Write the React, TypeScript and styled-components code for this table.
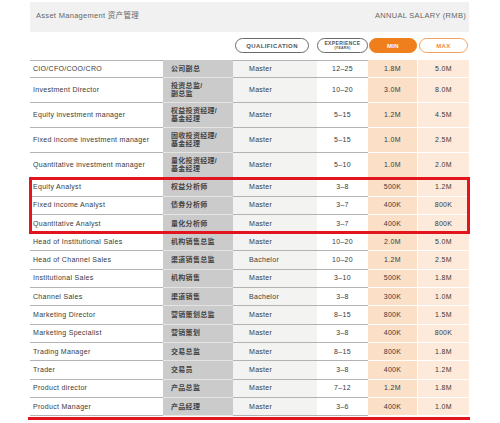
import React from "react";
import styled, { createGlobalStyle, css } from "styled-components";

const Global = createGlobalStyle`
  html, body { margin: 0; padding: 0; background: #ffffff; }
  body { font-family: "Liberation Sans", Arial, sans-serif; }
`;

const COLS = "133px 70px 84px 51px 50px 51px";
const RED = "#e2141d";
const ORANGE = "#ef7f1c";

const Page = styled.div`
  width: 439px;
  padding: 2px 0 0 30px;
`;

const Header = styled.div`
  height: 30px;
  box-sizing: border-box;
  background: #f1f1f1;
  display: flex;
  justify-content: space-between;
  align-items: flex-start;
  padding: 9px 3px 0 6px;
  font-size: 7.5px;
  line-height: 9px;
  letter-spacing: 0.3px;
  color: #666;
`;

const HeaderTitle = styled.span`
  font-family: "Liberation Sans", "Noto Sans CJK SC", sans-serif;
`;

const PillRow = styled.div`
  display: grid;
  grid-template-columns: ${COLS};
  margin-top: 6px;
  height: 15px;
`;

type PillKind = "outline" | "filled" | "orange";

const Pill = styled.div<{ $kind: PillKind; $col: number }>`
  grid-column: ${(p) => p.$col};
  box-sizing: border-box;
  height: 15px;
  border-radius: 8px;
  display: flex;
  flex-direction: column;
  align-items: center;
  justify-content: center;
  font-weight: 700;
  font-size: 6px;
  letter-spacing: 0.4px;
  line-height: 6px;
  ${(p) =>
    p.$kind === "outline"
      ? css`
          border: 1px solid #6a6a6a;
          color: #555;
          background: #fff;
        `
      : p.$kind === "filled"
      ? css`
          border: 1px solid ${ORANGE};
          background: ${ORANGE};
          color: #fff;
        `
      : css`
          border: 1px solid #f3a160;
          background: #fff;
          color: #f08a34;
        `}
`;

const QualPill = styled(Pill)`
  margin: 0 8px 0 2px;
`;

const SidePill = styled(Pill)`
  margin: 0 1px;
`;

const PillSub = styled.span`
  font-size: 3.6px;
  line-height: 4px;
  letter-spacing: 0.2px;
`;

const Table = styled.div`
  margin-top: 7px;
`;

const Row = styled.div<{ $tall?: boolean; $first?: boolean }>`
  display: grid;
  grid-template-columns: ${COLS};
  min-height: ${(p) => (p.$tall ? "25px" : "18.3px")};
  ${(p) =>
    p.$first &&
    css`
      & > div:nth-child(1),
      & > div:nth-child(3),
      & > div:nth-child(4) {
        border-top: 1px solid #b3b3b3;
      }
    `}
`;

const Highlight = styled.div`
  outline: 3px solid ${RED};
  outline-offset: -2px;
  position: relative;
  z-index: 1;
`;

const Cell = styled.div<{ $col: number }>`
  box-sizing: border-box;
  display: flex;
  align-items: center;
  padding: 4px 3px;
  font-size: 7px;
  line-height: 8px;
  letter-spacing: 0.3px;
  color: #3a3a3a;
  border-bottom: 1px solid #b3b3b3;
  ${(p) =>
    p.$col === 2 &&
    css`
      background: #cbcbcb;
      border-bottom-color: #e4e4e4;
      padding-left: 8px;
      font-family: "Liberation Sans", "Noto Sans CJK SC", sans-serif;
      font-weight: 700;
      color: #444;
      white-space: pre-line;
    `}
  ${(p) =>
    p.$col === 3 &&
    css`
      background: #f3f3f1;
      padding-left: 16px;
    `}
  ${(p) =>
    p.$col === 4 &&
    css`
      justify-content: center;
    `}
  ${(p) =>
    p.$col === 5 &&
    css`
      background: #fbdfc6;
      border-bottom-color: #fff;
      border-right: 1px solid #fff;
      justify-content: center;
    `}
  ${(p) =>
    p.$col === 6 &&
    css`
      background: #fdeadb;
      border-bottom-color: #fff;
      justify-content: center;
    `}
`;

const BottomRule = styled.div`
  height: 3px;
  background: ${RED};
  margin: 1px -1px 0 -2px;
`;

type Entry = [string, string, string, string, string, string];

const rows: Entry[] = [
  ["CIO/CFO/COO/CRO", "公司副总", "Master", "12–25", "1.8M", "5.0M"],
  ["Investment Director", "投资总监/\n副总监", "Master", "10–20", "3.0M", "8.0M"],
  ["Equity investment manager", "权益投资经理/\n基金经理", "Master", "5–15", "1.2M", "4.5M"],
  ["Fixed income investment manager", "固收投资经理/\n基金经理", "Master", "5–15", "1.0M", "2.5M"],
  ["Quantitative investment manager", "量化投资经理/\n基金经理", "Master", "5–10", "1.0M", "2.0M"],
  ["Equity Analyst", "权益分析师", "Master", "3–8", "500K", "1.2M"],
  ["Fixed income Analyst", "债券分析师", "Master", "3–7", "400K", "800K"],
  ["Quantitative Analyst", "量化分析师", "Master", "3–7", "400K", "800K"],
  ["Head of Institutional Sales", "机构销售总监", "Master", "10–20", "2.0M", "5.0M"],
  ["Head of Channel Sales", "渠道销售总监", "Bachelor", "10–20", "1.2M", "2.5M"],
  ["Institutional Sales", "机构销售", "Master", "3–10", "500K", "1.8M"],
  ["Channel Sales", "渠道销售", "Bachelor", "3–8", "300K", "1.0M"],
  ["Marketing Director", "营销策划总监", "Master", "8–15", "800K", "1.5M"],
  ["Marketing Specialist", "营销策划", "Master", "3–8", "400K", "800K"],
  ["Trading Manager", "交易总监", "Master", "8–15", "800K", "1.8M"],
  ["Trader", "交易员", "Master", "3–8", "400K", "1.2M"],
  ["Product director", "产品总监", "Master", "7–12", "1.2M", "1.8M"],
  ["Product Manager", "产品经理", "Master", "3–6", "400K", "1.0M"],
];

const renderRow = (r: Entry, i: number) => (
  <Row key={i} $tall={r[1].includes("\n")} $first={i === 0}>
    {r.map((v, c) => (
      <Cell key={c} $col={c + 1}>
        {v}
      </Cell>
    ))}
  </Row>
);

export default function App() {
  return (
    <>
      <Global />
      <Page>
        <Header>
          <HeaderTitle>Asset Management 资产管理</HeaderTitle>
          <span>ANNUAL SALARY (RMB)</span>
        </Header>
        <PillRow>
          <QualPill $kind="outline" $col={3}>
            QUALIFICATION
          </QualPill>
          <Pill $kind="outline" $col={4}>
            <span style={{ fontSize: "5px", lineHeight: "5px" }}>EXPERIENCE</span>
            <PillSub>(YEARS)</PillSub>
          </Pill>
          <SidePill $kind="filled" $col={5}>
            MIN
          </SidePill>
          <SidePill $kind="orange" $col={6}>
            MAX
          </SidePill>
        </PillRow>
        <Table>
          {rows.slice(0, 5).map((r, i) => renderRow(r, i))}
          <Highlight>{rows.slice(5, 8).map((r, i) => renderRow(r, i + 5))}</Highlight>
          {rows.slice(8).map((r, i) => renderRow(r, i + 8))}
        </Table>
        <BottomRule />
      </Page>
    </>
  );
}
